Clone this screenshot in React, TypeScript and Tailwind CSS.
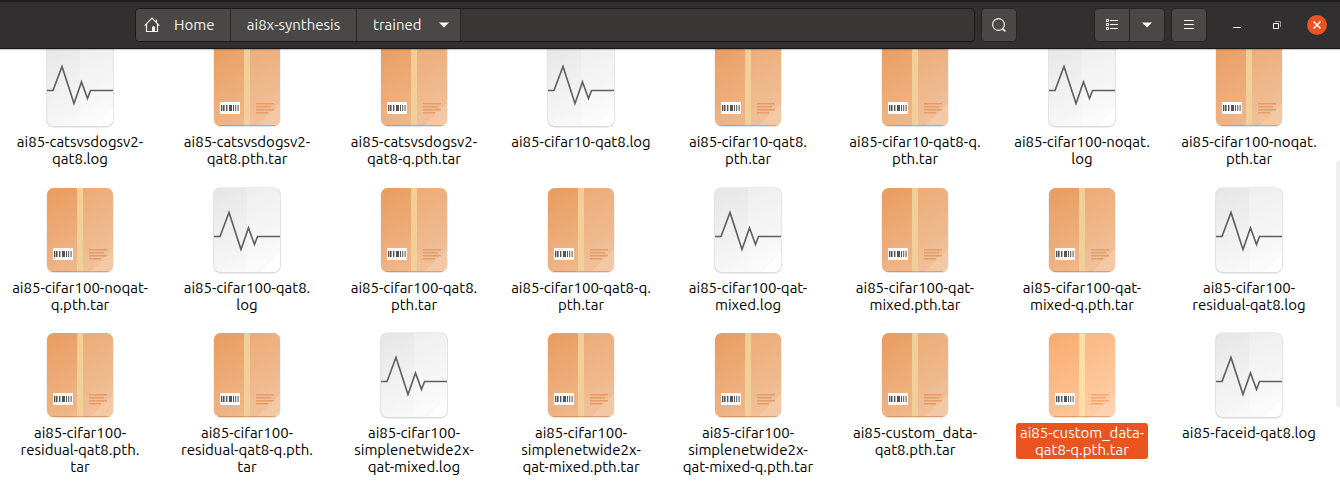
import React from "react";

type Kind = "log" | "tar";

interface FileEntry {
  kind: Kind;
  lines: string[];
  selected?: boolean;
}

const files: FileEntry[] = [
  { kind: "log", lines: ["ai85-catsvsdogsv2-", "qat8.log"] },
  { kind: "tar", lines: ["ai85-catsvsdogsv2-", "qat8.pth.tar"] },
  { kind: "tar", lines: ["ai85-catsvsdogsv2-", "qat8-q.pth.tar"] },
  { kind: "log", lines: ["ai85-cifar10-qat8.log"] },
  { kind: "tar", lines: ["ai85-cifar10-qat8.", "pth.tar"] },
  { kind: "tar", lines: ["ai85-cifar10-qat8-q.", "pth.tar"] },
  { kind: "log", lines: ["ai85-cifar100-noqat.", "log"] },
  { kind: "tar", lines: ["ai85-cifar100-noqat.", "pth.tar"] },
  { kind: "tar", lines: ["ai85-cifar100-noqat-", "q.pth.tar"] },
  { kind: "log", lines: ["ai85-cifar100-qat8.", "log"] },
  { kind: "tar", lines: ["ai85-cifar100-qat8.", "pth.tar"] },
  { kind: "tar", lines: ["ai85-cifar100-qat8-q.", "pth.tar"] },
  { kind: "log", lines: ["ai85-cifar100-qat-", "mixed.log"] },
  { kind: "tar", lines: ["ai85-cifar100-qat-", "mixed.pth.tar"] },
  { kind: "tar", lines: ["ai85-cifar100-qat-", "mixed-q.pth.tar"] },
  { kind: "log", lines: ["ai85-cifar100-", "residual-qat8.log"] },
  { kind: "tar", lines: ["ai85-cifar100-", "residual-qat8.pth.", "tar"] },
  { kind: "tar", lines: ["ai85-cifar100-", "residual-qat8-q.pth.", "tar"] },
  { kind: "log", lines: ["ai85-cifar100-", "simplenetwide2x-", "qat-mixed.log"] },
  { kind: "tar", lines: ["ai85-cifar100-", "simplenetwide2x-", "qat-mixed.pth.tar"] },
  { kind: "tar", lines: ["ai85-cifar100-", "simplenetwide2x-", "qat-mixed-q.pth.tar"] },
  { kind: "tar", lines: ["ai85-custom_data-", "qat8.pth.tar"] },
  { kind: "tar", lines: ["ai85-custom_data-", "qat8-q.pth.tar"], selected: true },
  { kind: "log", lines: ["ai85-faceid-qat8.log"] },
];

function IconDefs() {
  return (
    <svg width="0" height="0" className="absolute" aria-hidden="true">
      <defs>
        <linearGradient id="box" x1="0" y1="0" x2="0.45" y2="1">
          <stop offset="0" stopColor="#e99c5f" />
          <stop offset="1" stopColor="#efb88c" />
        </linearGradient>
        <linearGradient id="boxLit" x1="0" y1="0" x2="0.45" y2="1">
          <stop offset="0" stopColor="#faab6c" />
          <stop offset="1" stopColor="#fdc69a" />
        </linearGradient>
        <linearGradient id="paper" x1="0" y1="0" x2="0.35" y2="1">
          <stop offset="0" stopColor="#e6e6e6" />
          <stop offset="1" stopColor="#f8f8f8" />
        </linearGradient>
        <clipPath id="sheet">
          <rect width="66" height="84" rx="6.5" />
        </clipPath>
      </defs>
    </svg>
  );
}

function TarIcon({ lit }: { lit?: boolean }) {
  const line = lit ? "#f3a66f" : "#e59c66";
  return (
    <svg width="70" height="88" viewBox="-2 -2 70 88" aria-hidden="true">
      <rect x="-0.5" y="0.3" width="67" height="84.6" rx="7" fill="#000" fillOpacity="0.1" />
      <g clipPath="url(#sheet)">
        <rect width="66" height="84" fill={lit ? "url(#boxLit)" : "url(#box)"} />
        <rect x="36" width="30" height="84" fill="#fff" fillOpacity="0.1" />
        <rect x="30" width="6" height="84" fill={lit ? "#ffdda6" : "#f0cf98"} />
        <path d="M43 84 66 61V84Z" fill="#fff" fillOpacity="0.14" />
        <rect y="83" width="66" height="1" fill="#a35a24" fillOpacity="0.35" />
      </g>
      <rect x="6" y="60" width="20" height="12" fill="#fdfbf9" />
      <path
        d="M7 63h1v6H7zM8.6 63h2v6h-2zM12 63h1.4v6H12zM15 63h3v6h-3zM19 63h1v6h-1zM21.2 63h1v6h-1zM23.6 63h1v6h-1z"
        fill="#555"
      />
      <path
        d="M42 61h18v1.6H42zM42 64h15v1.6H42zM42 67h18v1.6H42zM42 70h12v1.6H42z"
        fill={line}
      />
    </svg>
  );
}

function LogIcon() {
  return (
    <svg width="70" height="88" viewBox="-2 -2 70 88" aria-hidden="true">
      <rect x="-0.8" y="-0.6" width="67.6" height="86" rx="7.2" fill="#000" fillOpacity="0.14" />
      <g clipPath="url(#sheet)">
        <rect width="66" height="84" fill="url(#paper)" />
        <rect x="33" width="33" height="84" fill="#fff" fillOpacity="0.25" />
        <path d="M48 84 66 66V84Z" fill="#fff" />
      </g>
      <path
        d="M0 48.5H6L15 24.5 27 61.5 34.5 40 40.5 56.5 43.5 48.5H66"
        fill="none"
        stroke="#5e5e5e"
        strokeWidth="1.6"
      />
    </svg>
  );
}

function FileItem({ file }: { file: FileEntry }) {
  return (
    <button type="button" aria-pressed={!!file.selected} className="flex flex-col items-center justify-start">
      {file.kind === "tar" ? <TarIcon lit={file.selected} /> : <LogIcon />}
      <span
        className={
          "mt-1 rounded-[3px] px-1 py-px text-center text-[15px] leading-[17px] whitespace-nowrap " +
          (file.selected ? "bg-[#e95420] text-white" : "text-black")
        }
      >
        {file.lines.map((l) => (
          <span key={l} className="block">
            {l}
          </span>
        ))}
      </span>
    </button>
  );
}

function Caret() {
  return (
    <svg width="10" height="6" viewBox="0 0 10 6" aria-hidden="true">
      <path d="M0 0.5H10L5 5.5Z" fill="#f7f7f7" />
    </svg>
  );
}

const tool = "flex h-[34px] w-9 items-center justify-center border border-[#262424] bg-[#494846]";

export default function App() {
  return (
    <div className="flex h-screen flex-col overflow-hidden bg-white font-['Ubuntu','Noto_Sans',sans-serif]">
      <IconDefs />
      <header className="z-10 flex h-[49px] shrink-0 items-center border-t-2 border-b border-t-[#1e1c1d] border-b-[#171616] bg-[#322f30] pr-[13px] pl-[135px] text-[15px] text-[#f2f2f2] shadow-[0_1px_1px_#0003]">
        <nav
          aria-label="Path"
          className="flex h-[34px] min-w-0 flex-1 overflow-hidden rounded-[4px] border border-[#1c1b1b] bg-[#393735]"
        >
          <button type="button" className="flex w-[95px] items-center gap-[14px] border-r border-[#2a2827] bg-[#494846] pl-2">
            <svg width="16" height="16" viewBox="0 0 16 16" aria-hidden="true">
              <path d="M0.7 8.6 8 1.2 15.3 8.6M2.5 7V14.5H13.5V7M12.5 2.5V6" fill="none" stroke="#f2f2f2" strokeWidth="1.2" />
              <path d="M8 15V9.8Q9.5 8 11 9.8V15Z" fill="#f2f2f2" />
            </svg>
            Home
          </button>
          <button type="button" className="w-[126px] border-r border-[#2a2827] bg-[#494846]">
            ai8x-synthesis
          </button>
          <button
            type="button"
            className="flex w-[104px] items-center justify-between border-r border-[#2a2827] bg-[#494846] pr-[11px] pl-4"
          >
            trained
            <Caret />
          </button>
        </nav>
        <button type="button" aria-label="Search" className={tool + " ml-1.5 rounded-[4px]"}>
          <svg width="16" height="16" viewBox="0 0 16 16" aria-hidden="true">
            <circle cx="7.5" cy="7.5" r="5.9" fill="none" stroke="#eee" strokeWidth="1.2" />
            <path d="M11.5 11.5 14.3 14.5" stroke="#eee" strokeWidth="1.8" />
          </svg>
        </button>
        <button type="button" aria-label="List view" className={tool + " ml-[77px] rounded-l-[4px]"}>
          <svg width="14" height="14" viewBox="0 0 14 14" aria-hidden="true">
            <path
              d="M1.5 1.5h2v2h-2zM1.5 5.5h2v2h-2zM1.5 9.5h2v2h-2z"
              fill="none"
              stroke="#f7f7f7"
            />
            <path d="M5 2h8v1H5zM5 6h8v1H5zM5 10h8v1H5z" fill="#f7f7f7" />
          </svg>
        </button>
        <button type="button" aria-label="View options" className={tool + " -ml-px rounded-r-[4px]"}>
          <Caret />
        </button>
        <button type="button" aria-label="Menu" className={tool + " ml-1.5 rounded-[4px]"}>
          <svg width="10" height="10" viewBox="0 0 10 10" aria-hidden="true">
            <path d="M0 0h10v1H0zM0 4h10v1H0zM0 8h10v1H0z" fill="#f7f7f7" />
          </svg>
        </button>
        <button type="button" aria-label="Minimize" className="ml-5 flex size-5 items-center justify-center">
          <svg width="8" height="8" viewBox="0 0 8 8" aria-hidden="true">
            <path d="M0 6h8v1H0z" fill="#f7f7f7" />
          </svg>
        </button>
        <button type="button" aria-label="Restore" className="ml-5 flex size-5 items-center justify-center">
          <svg width="8" height="8" viewBox="0 0 8 8" aria-hidden="true">
            <path d="M2 .5h5.5V6" fill="none" stroke="#999" />
            <path d="M.5 2.5h5v5h-5z" fill="none" stroke="#fff" />
          </svg>
        </button>
        <button
          type="button"
          aria-label="Close"
          className="ml-5 flex size-5 items-center justify-center rounded-full bg-[#e95420]"
        >
          <svg width="8" height="8" viewBox="0 0 8 8" aria-hidden="true">
            <path d="M.5 .5 7.5 7.5M7.5 .5 .5 7.5" stroke="#fff" strokeWidth="1.5" />
          </svg>
        </button>
      </header>
      <main className="flex min-h-0 flex-1 overflow-hidden">
        <div className="-mt-[9px] grid flex-1 grid-cols-8 grid-rows-[146px_145px_auto] gap-x-[23px] pr-[15px] pl-2">
          {files.map((f) => (
            <FileItem key={f.kind + f.lines.join("")} file={f} />
          ))}
        </div>
        <div className="w-1 pt-[111px]">
          <div className="h-[248px] rounded-l-sm bg-[#f0f0f0]" />
        </div>
      </main>
    </div>
  );
}
